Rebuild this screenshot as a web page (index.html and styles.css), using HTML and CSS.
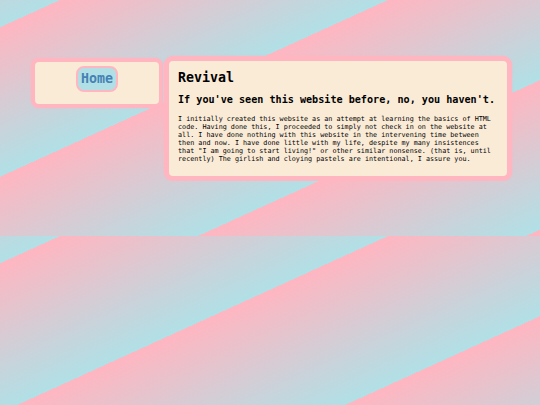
FILE: index.html
```html
<!DOCTYPE html>
<html lang="en">
<head>
<meta charset="utf-8">
<title>Revival</title>
<link rel="stylesheet" href="styles.css">
</head>
<body>
<div class="layout">
  <nav class="sidebar">
    <a class="home" href="#">Home</a>
  </nav>
  <main class="content">
    <h1 class="title">Revival</h1>
    <h2 class="subtitle">If you've seen this website before, no, you haven't.</h2>
    <p class="text">I initially created this website as an attempt at learning the basics of HTML code. Having done this, I proceeded to simply not check in on the website at all. I have done nothing with this website in the intervening time between then and now. I have done little with my life, despite my many insistences that "I am going to start living!" or other similar nonsense. (that is, until recently) The girlish and cloying pastels are intentional, I assure you.</p>
  </main>
</div>
</body>
</html>
```
FILE: styles.css
```css
html {
  min-height: 100%;
  background: repeating-linear-gradient(155.5deg, #ffb6c1 24.9px, #b0e0e6 160.9px) 0 0 / 540px 236px repeat;
}

body {
  margin: 0;
  font-family: "DejaVu Sans Mono", "Liberation Mono", monospace;
  color: #000;
}

.layout {
  display: flex;
  align-items: flex-start;
  gap: 1px;
  margin: 56px 0 0 31px;
}

.sidebar {
  box-sizing: border-box;
  width: 132px;
  margin-top: 2px;
  padding: 4px 0 12px;
  border: 4px solid #ffb6c1;
  border-radius: 8px;
  background: #faebd7;
  box-shadow: 0 0 2px #ffb6c1;
  text-align: center;
}

.home {
  display: inline-block;
  padding: 3px 3px;
  border: 2px solid #ffb6c1;
  border-radius: 8px;
  background: #b0e0e6;
  color: #4682b4;
  font-weight: bold;
  font-size: 13.3px;
  line-height: 15.5px;
  text-decoration: none;
}

.content {
  box-sizing: border-box;
  width: 348px;
  padding: 9px 9px 13px;
  border: 5px solid #ffb6c1;
  border-radius: 9px;
  background: #faebd7;
  box-shadow: 0 0 2px #ffb6c1;
}

.title {
  margin: 0 0 8.8px;
  font-size: 13.3px;
  line-height: 15.5px;
}

.subtitle {
  margin: 0 0 8.6px;
  font-size: 10.15px;
  line-height: 11.8px;
  white-space: nowrap;
}

.text {
  margin: 0;
  font-size: 6.76px;
  line-height: 8px;
}
```
